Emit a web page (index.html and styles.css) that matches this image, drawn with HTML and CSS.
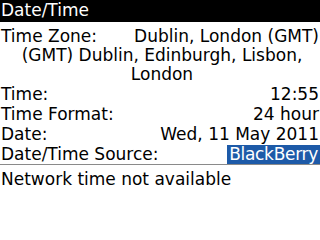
FILE: index.html
```html
<!DOCTYPE html>
<html>
<head>
<meta charset="utf-8">
<link rel="stylesheet" href="styles.css">
</head>
<body>
<div class="header">Date/Time</div>
<div class="row first">
  <span class="label">Time Zone:</span>
  <span class="value">Dublin, London (GMT)</span>
</div>
<div class="desc">(GMT) Dublin, Edinburgh, Lisbon,<br>London</div>
<div class="row">
  <span class="label">Time:</span>
  <span class="value">12:55</span>
</div>
<div class="row">
  <span class="label">Time Format:</span>
  <span class="value">24 hour</span>
</div>
<div class="row">
  <span class="label">Date:</span>
  <span class="value">Wed, 11 May 2011</span>
</div>
<div class="row source">
  <span class="label">Date/Time Source:</span>
  <span class="value selected">BlackBerry</span>
</div>
<div class="note">Network time not available</div>
</body>
</html>
```
FILE: styles.css
```css
html, body {
  margin: 0;
  padding: 0;
  background: #fff;
}
body {
  width: 320px;
  height: 240px;
  overflow: hidden;
  font-family: "DejaVu Sans", sans-serif;
  font-size: 17px;
  line-height: 20px;
  color: #000;
}
.header {
  background: #000;
  color: #fff;
  height: 22px;
  line-height: 21px;
  padding-left: 1px;
}
.row {
  display: flex;
  justify-content: space-between;
  align-items: flex-end;
  height: 20px;
  padding: 0 1px;
}
.first {
  margin-top: 4px;
}
.desc {
  text-align: center;
  line-height: 19px;
  padding-left: 4px;
}
.source {
  border-bottom: 1px solid #8a8a8a;
  padding-right: 0;
}
.selected {
  display: block;
  background: #1d5aa8;
  color: #fff;
  height: 19px;
  line-height: 19px;
  letter-spacing: -0.3px;
  padding: 0 2px 0 2px;
  white-space: nowrap;
}
.note {
  padding-left: 1px;
  margin-top: 4px;
}
```
